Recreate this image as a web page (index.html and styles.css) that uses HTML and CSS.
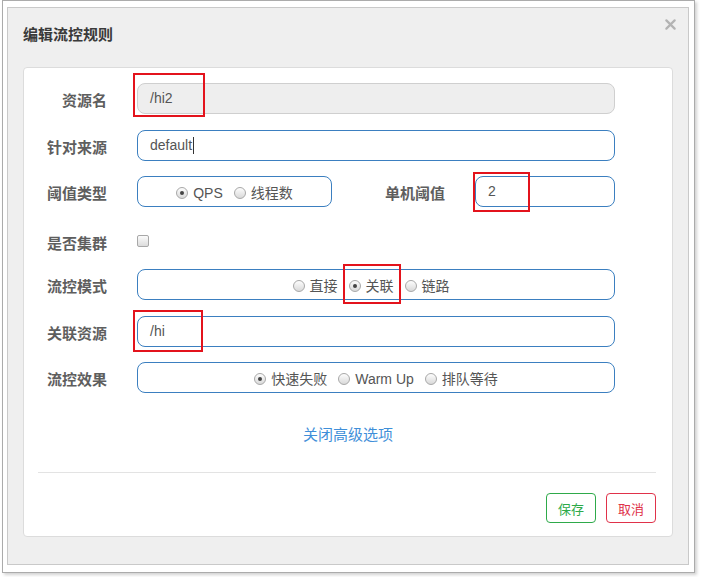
FILE: index.html
```html
<!DOCTYPE html>
<html lang="zh">
<head>
<meta charset="utf-8">
<title>编辑流控规则</title>
<link rel="stylesheet" href="styles.css">
</head>
<body>
<div class="frame">
  <div class="dialog">
    <div class="dialog-header">
      <h4 class="dialog-title">编辑流控规则</h4>
      <svg class="close" width="12" height="12" viewBox="0 0 12 12"><path d="M1.5 1.5 L10.5 10.5 M10.5 1.5 L1.5 10.5" stroke="#b3b3b3" stroke-width="2.4" stroke-linecap="round"/></svg>
    </div>
    <div class="card">
      <div class="form">
        <div class="row">
          <label class="label">资源名</label>
          <div class="field field-wide disabled">/hi2</div>
        </div>
        <div class="row">
          <label class="label">针对来源</label>
          <div class="field field-wide">default<span class="caret"></span></div>
        </div>
        <div class="row">
          <label class="label">阈值类型</label>
          <div class="field field-mid radios">
            <span class="radio checked"></span><span class="rtext">QPS</span>
            <span class="radio"></span><span class="rtext">线程数</span>
          </div>
          <label class="label label2">单机阈值</label>
          <div class="field field-small">2</div>
        </div>
        <div class="row row-check">
          <label class="label">是否集群</label>
          <span class="checkbox"></span>
        </div>
        <div class="row">
          <label class="label">流控模式</label>
          <div class="field field-wide radios radios-mode">
            <span class="radio"></span><span class="rtext">直接</span>
            <span class="radio checked"></span><span class="rtext">关联</span>
            <span class="radio"></span><span class="rtext">链路</span>
          </div>
        </div>
        <div class="row">
          <label class="label">关联资源</label>
          <div class="field field-wide">/hi</div>
        </div>
        <div class="row">
          <label class="label">流控效果</label>
          <div class="field field-wide radios">
            <span class="radio checked"></span><span class="rtext">快速失败</span>
            <span class="radio"></span><span class="rtext">Warm Up</span>
            <span class="radio"></span><span class="rtext">排队等待</span>
          </div>
        </div>
      </div>
      <div class="advanced"><a class="link">关闭高级选项</a></div>
      <hr class="divider">
      <div class="footer">
        <button class="btn btn-save">保存</button>
        <button class="btn btn-cancel">取消</button>
      </div>
    </div>
  </div>
</div>
<div class="mark mark-1"></div>
<div class="mark mark-2"></div>
<div class="mark mark-3"></div>
<div class="mark mark-4"></div>
</body>
</html>
```
FILE: styles.css
```css
* { box-sizing: border-box; }
html, body { margin: 0; padding: 0; background: #fff; }
body {
  position: relative;
  width: 701px;
  height: 577px;
  overflow: hidden;
  font-family: "Liberation Sans", "Noto Sans CJK SC", sans-serif;
  color: #555;
}
.frame {
  margin-left: 2px;
  width: 693px;
  height: 573px;
  border: 1px solid #ababab;
  box-shadow: 2px 2px 3px rgba(0,0,0,0.18);
  padding: 6px 0 0 4px;
  background: #fff;
}
.dialog {
  width: 682px;
  height: 558px;
  background: #efefef;
  border: 1px solid #c9c9c9;
}
.dialog-header {
  height: 59px;
  padding: 0 12px 0 15px;
  display: flex;
  justify-content: space-between;
  align-items: flex-start;
}
.dialog-title {
  margin: 17px 0 0;
  font-size: 15px;
  line-height: 20px;
  font-weight: bold;
  color: #3a3a3a;
}
.close { margin-top: 11px; width: 11px; height: 11px; }
.card {
  margin: 0 15px;
  background: #fff;
  border: 1px solid #dcdcdc;
  border-radius: 4px;
  padding: 15px 0 13px;
}
.form {
  display: flex;
  flex-direction: column;
  gap: 15.5px;
}
.row {
  height: 31px;
  display: flex;
  align-items: center;
}
.row-check { padding-top: 6px; }
.label {
  width: 83px;
  margin-right: 30px;
  text-align: right;
  font-size: 15px;
  font-weight: bold;
  color: #5e5e5e;
  padding-top: 2px;
}
.label2 { width: 113px; }
.field {
  height: 31px;
  border: 1px solid #3b7fc0;
  border-radius: 8px;
  padding: 0 12px;
  font-size: 14px;
  line-height: 29px;
  color: #555;
  display: flex;
  align-items: center;
}
.field-wide { width: 478px; }
.field-mid { width: 195px; }
.field-small { width: 140px; }
.disabled { background: #eee; border-color: #cfcfcf; }
.caret { display: inline-block; width: 1px; height: 17px; background: #333; margin-left: 1px; }
.radios { justify-content: center; padding-top: 3px; }
.radios-mode { padding-right: 22px; }
.radio {
  width: 12px;
  height: 12px;
  border-radius: 50%;
  border: 1px solid #a8a8a8;
  background: linear-gradient(#fdfdfd, #d9d9d9);
  margin-right: 5px;
  position: relative;
  flex: none;
}
.radio.checked::after {
  content: "";
  position: absolute;
  left: 3px;
  top: 3px;
  width: 4px;
  height: 4px;
  border-radius: 50%;
  background: #444;
}
.rtext { margin-right: 11px; white-space: nowrap; }
.rtext:last-child { margin-right: 0; }
.checkbox {
  width: 12px;
  height: 12px;
  border: 1px solid #a8a8a8;
  border-radius: 2px;
  background: linear-gradient(#fbfbfb, #dcdcdc);
}
.advanced {
  margin-top: 32px;
  text-align: center;
  line-height: 20px;
}
.link { font-size: 15px; color: #3f8fd9; }
.divider {
  margin: 27px 16px 0 14px;
  border: 0;
  border-top: 1px solid #e3e3e3;
  height: 0;
}
.footer {
  margin-top: 20px;
  padding-right: 16px;
  display: flex;
  justify-content: flex-end;
  gap: 10px;
}
.btn {
  width: 50px;
  height: 30px;
  background: #fff;
  border: 1px solid;
  border-radius: 4px;
  font-family: "Liberation Sans", "Noto Sans CJK SC", sans-serif;
  font-size: 13px;
  padding: 0;
}
.btn-save { border-color: #2eaa4a; color: #2eaa4a; }
.btn-cancel { border-color: #e0324a; color: #e0324a; }
.mark {
  position: absolute;
  border: 2px solid #e3131c;
}
.mark-1 { left: 133px; top: 73px; width: 72px; height: 44px; }
.mark-2 { left: 473px; top: 172px; width: 57px; height: 40px; }
.mark-3 { left: 343px; top: 264px; width: 58px; height: 40px; }
.mark-4 { left: 133px; top: 310px; width: 70px; height: 42px; }
```
